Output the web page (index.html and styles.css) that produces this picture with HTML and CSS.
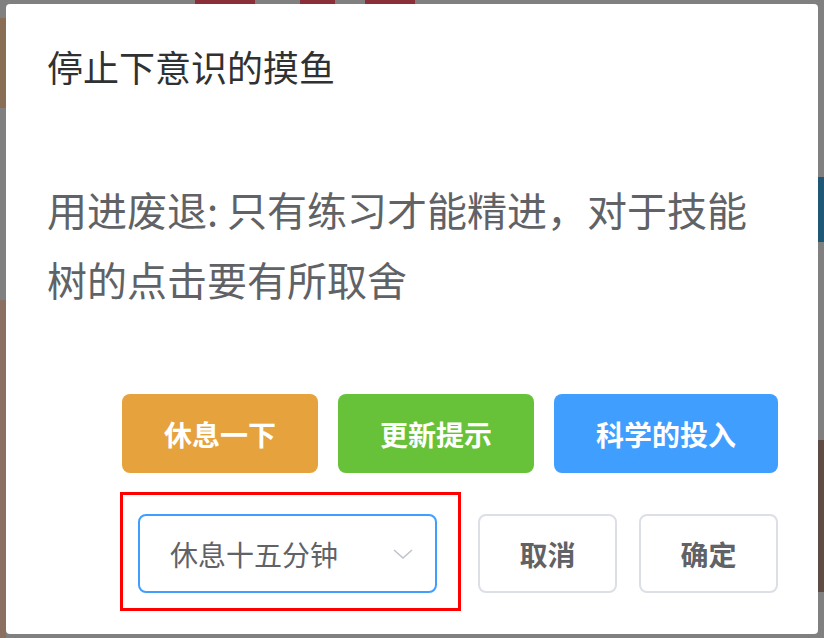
FILE: index.html
```html
<!DOCTYPE html>
<html lang="zh-CN">
<head>
    <meta charset="UTF-8">
    <meta name="viewport" content="width=device-width, initial-scale=1.0">
    <title>停止下意识的摸鱼</title>
    <link rel="stylesheet" href="styles.css">
</head>
<body>
    <div class="dialog">
        <h2 class="dialog-title">停止下意识的摸鱼</h2>
        <p class="dialog-message">用进废退: 只有练习才能精进，对于技能树的点击要有所取舍</p>

        <!-- quick actions -->
        <div class="action-row">
            <button type="button" class="btn btn-warning">休息一下</button>
            <button type="button" class="btn btn-success">更新提示</button>
            <button type="button" class="btn btn-primary">科学的投入</button>
        </div>

        <!-- footer -->
        <div class="footer-row">
            <div class="highlight">
                <div class="select">
                    <span class="select-value">休息十五分钟</span>
                    <svg class="select-arrow" width="20" height="10" viewBox="0 0 20 10">
                        <path d="M1 1 L10 9 L19 1" fill="none" stroke="#c0c4cc" stroke-width="1.6"/>
                    </svg>
                </div>
            </div>
            <button type="button" class="btn btn-plain btn-cancel">取消</button>
            <button type="button" class="btn btn-plain">确定</button>
        </div>
    </div>
</body>
</html>
```

FILE: styles.css
```css
body {
    margin: 0;
    padding: 4px 6px;
    height: 638px;
    box-sizing: border-box;
    overflow: hidden;
    font-family: "Noto Sans CJK SC", "Noto Sans", sans-serif;
    background:
        linear-gradient(#8a6d55, #8a6d55) 0 18px / 6px 90px no-repeat,
        linear-gradient(#8b7062, #8b7062) 0 300px / 6px 338px no-repeat,
        linear-gradient(#8a2e38, #8a2e38) 195px 0 / 60px 4px no-repeat,
        linear-gradient(#8a2e38, #8a2e38) 300px 0 / 35px 4px no-repeat,
        linear-gradient(#8a2e38, #8a2e38) 365px 0 / 50px 4px no-repeat,
        linear-gradient(#1f5877, #1f5877) 818px 177px / 6px 65px no-repeat,
        linear-gradient(#5e4c44, #5e4c44) 818px 440px / 6px 152px no-repeat,
        #808080;
}

.dialog {
    background: #ffffff;
    border-radius: 4px;
    height: 630px;
    box-sizing: border-box;
    padding: 37px 40px 23px 41px;
}

.dialog-title {
    margin: 0;
    font-size: 36px;
    line-height: 1.4;
    font-weight: normal;
    color: #303133;
}

.dialog-message {
    margin: 83px 0 0;
    font-size: 40px;
    line-height: 70px;
    color: #606266;
}

.action-row {
    display: flex;
    justify-content: flex-end;
    gap: 20px;
    margin-top: 80px;
}

.btn {
    height: 79px;
    padding: 0 42px;
    border: none;
    border-radius: 8px;
    font-family: inherit;
    font-size: 28px;
    font-weight: 600;
    color: #ffffff;
    cursor: pointer;
}

.btn-warning {
    background-color: #e6a23c;
}

.btn-success {
    background-color: #67c23a;
}

.btn-primary {
    background-color: #409eff;
}

.footer-row {
    display: flex;
    justify-content: flex-end;
    align-items: flex-start;
    margin-top: 19px;
}

.highlight {
    border: 3px solid #ff0000;
    padding: 19px 21px 15px 15px;
}

.select {
    width: 299px;
    height: 79px;
    box-sizing: border-box;
    border: 2px solid #409eff;
    border-radius: 8px;
    padding: 0 22px 0 30px;
    display: flex;
    align-items: center;
    justify-content: space-between;
}

.select-value {
    font-size: 28px;
    color: #606266;
}

.btn-plain {
    width: 139px;
    margin-top: 22px;
    margin-left: 22px;
    padding: 0;
    background: #ffffff;
    border: 2px solid #dcdfe6;
    color: #606266;
    font-weight: bold;
}

.btn-cancel {
    margin-left: 17px;
}
```
